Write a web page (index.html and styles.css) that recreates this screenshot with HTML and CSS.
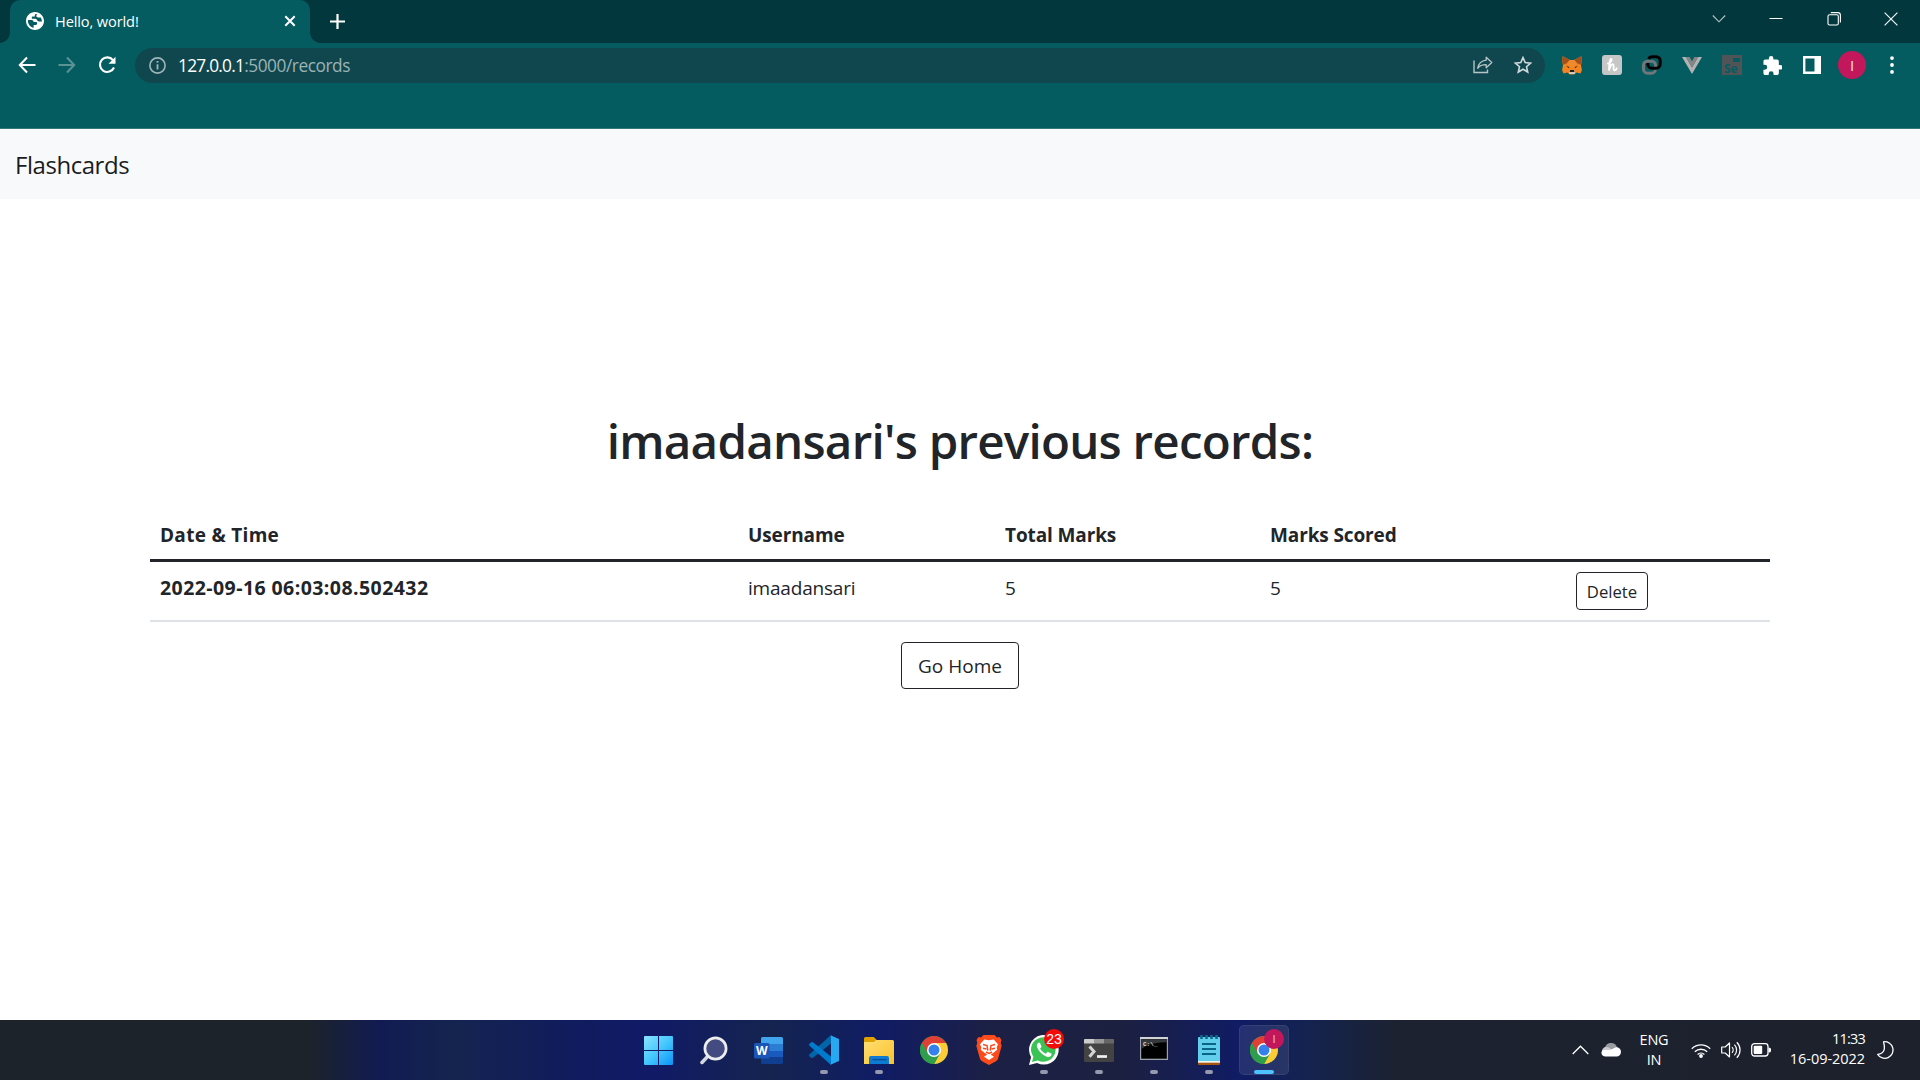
FILE: index.html
```html
<!DOCTYPE html>
<html lang="en">
<head>
<meta charset="utf-8">
<title>Hello, world!</title>
<link rel="stylesheet" href="styles.css">
</head>
<body>
<header class="browser">
  <div class="tabstrip">
    <div class="tab">
      <svg class="globe" width="18" height="18" viewBox="2 2 20 20"><path d="M12 2C6.480 2 2 6.480 2 12s4.480 10 10 10 10-4.480 10-10S17.520 2 12 2zm-1.500 17.600C7 18.900 4.200 15.800 4.200 12c0-.4 0-.8.100-1.200l4 .2c1.400 0 2.200 1 2.200 2.200h2.700c.7 0 1.200.6 1.200 1.300 0 1.200-.8 2-2 2h-1.900zM19.700 12.500h-3.300c-1 0-1.700-.5-2-1.300-.5-1.200-1.500-1.700-3-1.700H8.500V8.200c0-.7.500-1.200 1.200-1.200h2.100V5.300c0-.5.400-1 1-1.200 1.500.1 1.200.2 1.700.3-.8.600-1 1.200-1 2 0 1 .8 1.600 1.900 1.600h2.900c.9 1.200 1.400 2.900 1.400 4.500z" fill="#fff" fill-rule="evenodd"/></svg>
      <span class="tab-title">Hello, world!</span>
      <svg class="tab-close" width="12" height="12" viewBox="0 0 12 12"><path d="M1.300 1.300l9.400 9.400M10.700 1.300 1.300 10.700" stroke="#fff" stroke-width="2"/></svg>
    </div>
    <svg class="new-tab" width="15" height="15" viewBox="0 0 15 15"><path d="M7.500 0v15M0 7.500h15" stroke="#fff" stroke-width="2.200"/></svg>
    <div class="window-controls">
      <svg viewBox="0 0 14 14"><path d="M.8 3.500 7 9.800l6.200-6.300" fill="none" stroke="#b4c4c5" stroke-width="1.100"/></svg>
      <svg viewBox="0 0 14 14"><path d="M.5 6.500h13" stroke="#fff" stroke-width="1"/></svg>
      <svg viewBox="0 0 14 14"><rect x="1" y="2.700" width="10.300" height="10.300" rx="1.500" fill="none" stroke="#fff" stroke-width="1.100"/><path d="M3.800.6h7a2.600 2.600 0 0 1 2.600 2.600v7.300" fill="none" stroke="#fff" stroke-width="1.100"/></svg>
      <svg viewBox="0 0 14 14"><path d="M.6.6l12.800 12.800M13.400.6.6 13.400" stroke="#f0f5f5" stroke-width="1.200"/></svg>
    </div>
  </div>
  <div class="toolbar">
    <div class="cell"><svg width="18" height="18" viewBox="0 0 18 18"><path d="M9 1.500 1.800 9 9 16.500M2 9h15.500" fill="none" stroke="#fff" stroke-width="2"/></svg></div>
    <div class="cell"><svg width="18" height="18" viewBox="0 0 18 18"><path d="M9 1.500 16.200 9 9 16.500M16 9H.5" fill="none" stroke="#5b9296" stroke-width="2"/></svg></div>
    <div class="cell"><svg width="18" height="18" viewBox="0 0 18 18"><path d="M15 4.100A7.300 7.300 0 1 0 16 11.500" fill="none" stroke="#fff" stroke-width="2.100"/><path d="M17.500.8v7h-7z" fill="#fff"/></svg></div>
    <div class="omnibox">
      <svg width="17" height="17" viewBox="0 0 17 17"><circle cx="8.500" cy="8.500" r="7.600" fill="none" stroke="#9fb5b8" stroke-width="1.600"/><path d="M8.500 7.200v5.300M8.500 4v1.800" stroke="#9fb5b8" stroke-width="1.800"/></svg>
      <span class="url">127.0.0.1<span class="path">:5000/records</span></span>
      <div class="cell"><svg width="20" height="18" viewBox="0 0 20 18"><path d="M1 4.500v12h13.500v-3" fill="none" stroke="#b6c4c6" stroke-width="1.400"/><path d="M13.200 1.200 18.800 6.500l-5.600 5.200V8.600c-4.200 0-6.700 1-8.500 3.700.6-4 3-7.500 8.500-8.200z" fill="none" stroke="#b6c4c6" stroke-width="1.300" stroke-linejoin="round"/></svg></div>
      <div class="cell"><svg width="18" height="18" viewBox="0 0 18 18"><path d="M9 1.600l2.200 5 5.400.5-4.100 3.600 1.200 5.300L9 13.200 4.300 16l1.200-5.300L1.400 7.100l5.400-.5z" fill="none" stroke="#d1dadb" stroke-width="1.600"/></svg></div>
    </div>
    <div class="extensions">
      <div class="cell"><svg width="20" height="19" viewBox="0 0 20 19"><path d="M.6.300 8 4h4L19.400.3l.4 5-.8 4 .9 4.700-1.300 3.600-4.100-1-2.300 2H7.800l-2.300-2-4.100 1L.1 14 1 9.300l-.8-4z" fill="#f3841f"/><path d="M.6.300 8 4 5 7.300 1 8.800.2 5.300zM19.400.3 12 4l3 3.300 4 1.500.8-3.500z" fill="#a3501e"/><path d="M5 7.300 7.800 4h4.400L15 7.300l-2.300 4.500H7.300z" fill="#ef8a2d"/><path d="M4 9.800 7.500 11l-.8 1.300zM16 9.800 12.500 11l.8 1.300z" fill="#4f2f16"/><path d="M7.300 14.500h5.400l.3 3.400H7z" fill="#d4c7bb"/><path d="M8 14h4l.4 2.100H7.600z" fill="#202020"/></svg></div>
      <div class="cell"><span class="honey"><svg width="20" height="20" viewBox="0 0 20 20"><path d="M6 8.500C9.500 8 10.500 3.800 8.800 4 7.300 4.300 7.500 10 7 15.500c1-4 2.500-6.500 4-6.200 1.700.4-.5 5.500 1.200 6 1.200.3 2-.8 2.500-2" fill="none" stroke="#fff" stroke-width="1.900" stroke-linecap="round"/></svg></span></div>
      <div class="cell"><svg width="20" height="20" viewBox="0 0 20 20"><rect x="1.500" y="6.200" width="12" height="12" rx="4" fill="none" stroke="#6f777b" stroke-width="3"/><path d="M10.200 1.700h4a4 4 0 0 1 4 4v3.500a4 4 0 0 1-4 4h-4.400a4 4 0 0 1-4-4V8M6.600 4a4 4 0 0 1 3.600-2.300" fill="none" stroke="#000" stroke-width="3"/></svg></div>
      <div class="cell"><svg width="20" height="17" viewBox="0 0 20 17"><path d="M0 0h4l6 10.400L16 0h4L10 17z" fill="#b2b2b2"/><path d="M4 0h3.600L10 4.200 12.400 0H16l-6 10.400z" fill="#858585"/></svg></div>
      <div class="cell"><span class="selenium">Se<i></i></span></div>
      <div class="cell"><svg width="19" height="19" viewBox="1.500 1 21 21"><path d="M20.500 11H19V7c0-1.100-.9-2-2-2h-4V3.500a2.500 2.500 0 0 0-5 0V5H4c-1.100 0-2 .9-2 2v3.800h1.500a2.700 2.700 0 0 1 0 5.400H2V20c0 1.100.9 2 2 2h3.800v-1.500a2.700 2.700 0 0 1 5.400 0V22H17c1.100 0 2-.9 2-2v-4h1.500a2.500 2.500 0 0 0 0-5z" fill="#fff"/></svg></div>
      <div class="cell"><svg width="18" height="18" viewBox="0 0 18 18"><path d="M0 0h18v18H0zM2.400 2.600v12.800h9.100V2.600z" fill="#fff" fill-rule="evenodd"/></svg></div>
      <div class="cell"><span class="avatar">I</span></div>
      <div class="cell"><svg width="4" height="18" viewBox="0 0 4 18"><circle cx="2" cy="2.100" r="1.900" fill="#fff"/><circle cx="2" cy="9" r="1.900" fill="#fff"/><circle cx="2" cy="15.900" r="1.900" fill="#fff"/></svg></div>
    </div>
  </div>
</header>

<nav class="navbar"><a class="brand">Flashcards</a></nav>

<main class="page">
  <h1>imaadansari's previous records:</h1>
  <table class="records">
    <colgroup><col class="c-date"><col class="c-user"><col class="c-total"><col class="c-score"><col></colgroup>
    <thead>
      <tr><th class="date-head">Date &amp; Time</th><th>Username</th><th>Total Marks</th><th>Marks Scored</th><th></th></tr>
    </thead>
    <tbody>
      <tr><th class="stamp">2022-09-16 06:03:08.502432</th><td>imaadansari</td><td>5</td><td>5</td><td><button class="btn small">Delete</button></td></tr>
    </tbody>
  </table>
  <button class="btn home">Go Home</button>
</main>

<footer class="taskbar">
  <div class="apps">
    <div class="app"><svg width="29" height="29" viewBox="0 0 29 29"><defs><linearGradient id="win" x1="0" y1="0" x2="1" y2="1"><stop offset="0" stop-color="#8be3ff"/><stop offset=".5" stop-color="#45c8fc"/><stop offset="1" stop-color="#0b93f8"/></linearGradient></defs><path d="M1 0h13v14H0V1a1 1 0 0 1 1-1zM15 0h13a1 1 0 0 1 1 1v13H15zM0 15h14v14H1a1 1 0 0 1-1-1zM15 15h14v13a1 1 0 0 1-1 1H15z" fill="url(#win)"/></svg></div>
    <div class="app"><svg width="28" height="29" viewBox="0 0 28 29"><path d="M8.500 19.500 2 26.500" stroke="#d5d8dc" stroke-width="3.500" stroke-linecap="round"/><circle cx="15.500" cy="12.500" r="10.600" fill="#444b80" stroke="#eceded" stroke-width="2.700"/></svg></div>
    <div class="app"><svg width="29" height="27" viewBox="0 0 29 27"><path d="M7 1.500A1.500 1.500 0 0 1 8.500 0h19A1.500 1.500 0 0 1 29 1.500V7H7z" fill="#41a5ee"/><path d="M7 7h22v7H7z" fill="#2b7cd3"/><path d="M7 14h22v6.500H7z" fill="#185abd"/><path d="M7 20.500h22v5a1.500 1.500 0 0 1-1.500 1.500h-19A1.500 1.500 0 0 1 7 25.500z" fill="#103f91"/><rect y="6" width="15.500" height="15.500" rx="1.500" fill="#1a56b8"/><text x="7.700" y="17.700" text-anchor="middle" class="glyph-w">W</text></svg></div>
    <div class="app running"><svg width="30" height="30" viewBox="0 0 30 30"><path d="M22 0v8.500L4 22.700a1.500 1.500 0 0 1-1.800 0L.5 21.200a1.300 1.300 0 0 1 0-1.900z" fill="#0065a9"/><path d="M22 30v-8.500L4 7.300a1.500 1.500 0 0 0-1.800 0L.5 8.800a1.300 1.300 0 0 0 0 1.900z" fill="#007acc"/><path d="M21.500.3 30 4v22l-8.500 3.700c.5-.3.500-1 .5-1.500v-26c0-.8 0-1.500-.5-1.900z" fill="#29a8f2"/></svg></div>
    <div class="app running"><svg width="30" height="27" viewBox="0 0 30 27"><defs><linearGradient id="fold" x1="0" y1="0" x2="1" y2="1"><stop offset="0" stop-color="#ffdf72"/><stop offset="1" stop-color="#fbc02d"/></linearGradient></defs><path d="M0 7V1.500A1.500 1.500 0 0 1 1.500 0h8.300l3 3H18v4z" fill="#dfa000"/><path d="M0 5h10l2-2h16.500A1.500 1.500 0 0 1 30 4.500V27H0z" fill="url(#fold)"/><path d="M5 27v-6a2 2 0 0 1 2-2h16a2 2 0 0 1 2 2v6z" fill="#0d7ad3"/><path d="M9 22.700h13" stroke="#0a4c92" stroke-width="1.300" stroke-linecap="round"/></svg></div>
    <div class="app"><svg width="28" height="28" viewBox="0 0 28 28"><g id="chrome"><circle cx="14" cy="14" r="14" fill="#2f9e4c"/><path d="M1.900 7A14 14 0 0 1 26.100 7H14v7z" fill="#df3f34"/><path d="M26.100 7A14 14 0 0 1 14 28l6-10.500L14 7z" fill="#fccb36"/><path d="M1.900 7 8 17.500 14 14V7z" fill="#df3f34"/><path d="M1.900 7A14 14 0 0 0 14 28l6-10.500H8z" fill="#2f9e4c"/><circle cx="14" cy="14" r="7" fill="#fff"/><circle cx="14" cy="14" r="5.500" fill="#3480ec"/></g></svg></div>
    <div class="app"><svg width="26" height="30" viewBox="0 0 26 30"><path d="M7.500 0h11l2.500 2.500 2.500-.4 2 3-.8 3 1 2.700-3.500 12.500q-.6 2-2.200 3L13 30l-7-3.700q-1.600-1-2.200-3L.3 10.800l1-2.700-.8-3 2-3L5 2.500z" fill="#fb4b1d"/><path d="M8.300 4.500 13 5.300l4.700-.8 4.300 4.700-1.300 3 .5 2.500-4 3.300-2.500 1.500 3.300 2.200L13 25l-5-3.300 3.300-2.200-2.500-1.500-4-3.300.5-2.500-1.300-3z" fill="#fff"/><path d="M7 9.500l4 1 .8 5.200M19 9.500l-4 1-.8 5.200M7 13.300l3.400.6M19 13.300l-3.400.6M10 17l3 1.500 3-1.500" fill="none" stroke="#fb4b1d" stroke-width="1.500"/></svg></div>
    <div class="app running"><svg width="30" height="30" viewBox="0 0 30 30"><path d="M0 30l2.100-7.700A14.800 14.800 0 1 1 8 27.900z" fill="#fff"/><path d="M3 27l1.400-5.200a12.300 12.300 0 1 1 4.400 3.700z" fill="#3bc455"/><path d="M9.400 7.800c-1.600 1.200-2 3-.9 5.300 2 4.200 5 7.200 9.300 8.700 2.300.8 4.700-.2 4.900-3l-4-2-1.800 2c-2.700-1.200-4.500-2.900-5.800-5.300l1.500-1.800-1.700-4z" fill="#fff"/></svg><span class="badge unread">23</span></div>
    <div class="app running"><svg width="30" height="23" viewBox="0 0 30 23"><rect width="30" height="23" rx="1.500" fill="#434343"/><path d="M1 0h9v4.500H0V1a1 1 0 0 1 1-1z" fill="#ccc"/><path d="M10 0h10v4.500H10z" fill="#999"/><path d="M20 0h9a1 1 0 0 1 1 1v3.500H20z" fill="#666"/><path d="M5.500 7.500 10 12.500l-4.500 5.300" fill="none" stroke="#d4d4d4" stroke-width="3"/><path d="M13 17.500h10" stroke="#f0f0f0" stroke-width="2.700"/></svg></div>
    <div class="app running"><svg class="cmd" width="28" height="23" viewBox="0 0 28 23"><rect width="28" height="23" fill="#9ba1ab"/><path d="M0 0h28v2H0z" fill="#cfd3d8"/><rect x="1.200" y="2.200" width="25.600" height="19.500" fill="#000"/><path d="M1.200 2.200h25.600v3C12 5 6 9 1.200 12z" fill="#35383c"/><text x="3" y="8.800" class="glyph-c">C:\_</text></svg></div>
    <div class="app running"><svg width="22" height="30" viewBox="0 0 22 30"><rect y="25" width="22" height="5" rx="1" fill="#a8560f"/><path d="M0 25.500h22v2.200H0z" fill="#f1f1f1"/><path d="M0 3a1 1 0 0 1 1-1h20a1 1 0 0 1 1 1v23H0z" fill="#61cfec"/><path d="M3.500 0v4M8.500 0v4M13.500 0v4M18.500 0v4" stroke="#0c6b8d" stroke-width="2.600"/><path d="M4 9h14M4 14h14M4 19h14" stroke="#0a6488" stroke-width="2"/></svg></div>
    <div class="app running active"><svg width="28" height="28" viewBox="0 0 28 28"><use href="#chrome"/></svg><span class="badge profile">I</span></div>
  </div>
  <div class="tray">
    <svg class="up" width="17" height="10" viewBox="0 0 17 10"><path d="M.7 9 8.500 1.200 16.300 9" fill="none" stroke="#fff" stroke-width="1.300"/></svg>
    <svg class="cloud" width="20" height="14" viewBox="0 0 20 14"><path d="M4 5A5.500 5.500 0 0 1 10 0c3.500 0 5.500 2 6 4.500l-2 3H3z" fill="#999ca1"/><path d="M3 4.500c3-1 5 0 7 1.500l5 4H2A4 4 0 0 1 3 4.500z" fill="#c9cbce"/><path d="M4 13.500a3.500 3.500 0 0 1-2-6.400L9 7l6-2.700c3 0 5 2 5 4.700s-2 4.500-4.500 4.500z" fill="#fff"/></svg>
    <div class="lang"><span>ENG</span><span>IN</span></div>
    <svg class="wifi" width="20" height="15" viewBox="0 0 20 15"><path d="M.8 5.700a13 13 0 0 1 18.400 0M3.800 8.800a8.800 8.800 0 0 1 12.400 0M6.600 11.500a4.900 4.900 0 0 1 6.800 0" fill="none" stroke="#fff" stroke-width="1.300"/><circle cx="10" cy="13" r="1.900" fill="#fff"/></svg>
    <svg class="sound" width="20" height="18" viewBox="0 0 20 18"><path d="M.7 6h3.500L8.500 2v14l-4.300-4H.7z" fill="none" stroke="#fff" stroke-width="1.200" stroke-linejoin="round"/><path d="M11 6.200a4 4 0 0 1 0 5.600M13.400 3.700a7.500 7.500 0 0 1 0 10.600M15.800 1.200a11 11 0 0 1 0 15.600" fill="none" stroke="#fff" stroke-width="1.200"/></svg>
    <svg class="battery" width="20" height="14" viewBox="0 0 20 14"><rect x=".7" y=".7" width="16.300" height="12.300" rx="2.800" fill="none" stroke="#fff" stroke-width="1.300"/><rect x="2.700" y="2.800" width="8.500" height="8.200" rx="1" fill="#fff"/><path d="M17.500 4.500q2.500 0 2.500 1.500v2q0 1.500-2.500 1.500z" fill="#fff"/></svg>
    <div class="clock"><span>11:33</span><span>16-09-2022</span></div>
    <svg class="moon" width="17" height="18" viewBox="0 0 17 18"><path d="M6.500.8a8.300 8.300 0 1 1-5.800 12.700c4.500-.8 6.300-3 6.600-5.500.3-2.700-.1-4.700-.8-7.200z" fill="none" stroke="#fff" stroke-width="1.300" stroke-linejoin="round"/></svg>
  </div>
</footer>
</body>
</html>
```
FILE: styles.css
```css
* { box-sizing: border-box; }
body {
  margin: 0;
  height: 1080px;
  overflow: hidden;
  display: flex;
  flex-direction: column;
  background: #fff;
  color: #212529;
  font: 19px/30px "Open Sans", "Noto Sans", sans-serif;
}
svg { display: block; flex: none; }

/* Browser frame */
.browser { height: 129px; background: #045c61; border-bottom: 1px solid #35797d; color: #fff; }
.tabstrip { height: 43px; background: #02383d; display: flex; align-items: center; padding-left: 10px; }
.tab {
  position: relative;
  width: 300px; height: 43px;
  background: #045c61;
  border-radius: 10px 10px 0 0;
  display: flex; align-items: center;
  padding: 0 14px 1px 16px;
}
.tab::before, .tab::after {
  content: ""; position: absolute; bottom: 0; width: 10px; height: 10px;
}
.tab::before { left: -10px; background: radial-gradient(circle at 0 0, transparent 9.500px, #045c61 10px); }
.tab::after { right: -10px; background: radial-gradient(circle at 100% 0, transparent 9.500px, #045c61 10px); }
.tab-title { margin-left: 11px; font-size: 14.600px; letter-spacing: -.12px; }
.tab-close { margin-left: auto; }
.new-tab { margin: 0 0 1px 20px; }
.window-controls { margin-left: auto; display: flex; gap: 43.500px; padding: 0 22px 6px 0; }
.window-controls svg { width: 14px; height: 14px; }
.toolbar { height: 44px; display: flex; align-items: center; padding-left: 7px; }
.cell { width: 40px; height: 40px; flex: none; display: flex; align-items: center; justify-content: center; }
.omnibox {
  flex: 1; height: 35px; margin-left: 8px; margin-right: 7px; padding-left: 14px; padding-right: 2px;
  border-radius: 18px; background: #10474e;
  display: flex; align-items: center;
}
.url { flex: 1; margin-left: 12px; padding-top: 1px; font-size: 17.300px; letter-spacing: -.75px; }
.path { color: #9bb3b5; letter-spacing: -.45px; }
.extensions { display: flex; padding-right: 8px; }
.honey { width: 20px; height: 20px; border-radius: 3px; background: #c6c6c6; }
.selenium {
  position: relative; width: 20px; height: 20px; background: #505457; color: #045c61;
  font: bold 12px/28px "Open Sans", sans-serif; padding-left: 2px;
}
.selenium i { position: absolute; right: 2px; top: 3px; width: 7px; height: 4px; background: #045c61; }
.avatar {
  width: 28px; height: 28px; border-radius: 50%; background: #c2185b; color: #f8dce7;
  font: 15px/28px "Open Sans", sans-serif; text-align: center;
}

/* Page */
.navbar { height: 70px; background: #f8f9fb; padding: 0 15px; display: flex; align-items: center; }
.brand { font-size: 24px; letter-spacing: -.45px; color: #1b1c1d; padding-top: 1px; }
.page { flex: 1; display: flex; flex-direction: column; align-items: center; padding-top: 212px; }
h1 { margin: 0; font-size: 47.500px; font-weight: 600; letter-spacing: -.75px; line-height: 60px; }
.records { width: 1620px; margin-top: 39px; table-layout: fixed; border-collapse: collapse; text-align: left; }
.records th, .records td { padding: 10px; vertical-align: top; }
.records td { letter-spacing: -.2px; }
.records td, .records tbody th { padding-top: 11px; }
.records thead th { height: 50px; padding: 10px 10px 9px; letter-spacing: -.12px; }
.records thead .date-head { letter-spacing: .3px; }
.records thead tr { border-bottom: 3px solid #212529; }
.records tbody tr { border-bottom: 2px solid #dee2e6; height: 60px; }
.records th { font-weight: 700; }
.records .stamp { font-size: 19.500px; letter-spacing: .43px; }
.c-date { width: 588px; } .c-user { width: 257px; } .c-total { width: 265px; } .c-score { width: 306px; }
.btn {
  display: block; background: #fff; color: #212529; border: 1px solid #212529; border-radius: 4px;
  font: inherit; text-align: center; padding: 0;
}
.btn.small { width: 72px; height: 38px; margin-top: -1px; padding-top: 1px; font-size: 16.700px; letter-spacing: 0; }
.btn.home { width: 118px; height: 47px; margin-top: 20px; }

/* Taskbar */
.taskbar {
  height: 60px; color: #fff;
  display: grid; grid-template-columns: 1fr 660px 1fr;
  background: linear-gradient(90deg, #1c232b 0, #1c232b 310px, #111b52 380px, #14244f 455px, #101c5d 570px, #111a66 650px, #14244f 770px, #101c64 880px, #1c2045 990px, #1c2040 1120px, #101c64 1240px, #14234f 1310px, #1c222f 1400px, #1c212c 100%);
}
.apps { grid-column: 2; display: flex; margin-left: 1px; }
.app { position: relative; width: 55px; height: 60px; flex: none; display: flex; align-items: center; justify-content: center; }
.app svg { position: relative; }
.app .cmd { margin-bottom: 3px; }
.running::after {
  content: ""; position: absolute; left: 24px; bottom: 6px; width: 8px; height: 4px; border-radius: 2px; background: #9499af;
}
.active::before {
  content: ""; position: absolute; inset: 5px 2px 5px 3px; border-radius: 5px; background: rgba(255,255,255,.09); border: 1px solid rgba(255,255,255,.07);
}
.running.active::after { left: 18px; width: 20px; background: #4cc2ff; }
.badge { position: absolute; left: 28px; top: 9px; width: 20px; height: 20px; border-radius: 50%; text-align: center; font: 14px/20px "Liberation Sans", sans-serif; }
.unread { background: #f50a0a; }
.profile { background: #c2185b; color: #f3a8c4; font-size: 11px; }
.glyph-w { font: bold 12px "Open Sans", sans-serif; fill: #fff; }
.glyph-c { font: bold 6px "Liberation Mono", monospace; fill: #ddd; }
.tray { display: flex; align-items: center; justify-content: flex-end; padding-right: 26px; }
.lang, .clock { display: flex; flex-direction: column; font-size: 14.500px; line-height: 20px; }
.lang { margin: 0 22px 0 18px; width: 30px; align-items: center; letter-spacing: -.2px; }
.clock { align-items: flex-end; margin: -2px 12px 0 18px; width: 76px; letter-spacing: -.05px; }
.clock span:first-child { letter-spacing: -.8px; }
.cloud { margin-left: 12px; }
.sound, .battery { margin-left: 10px; }
```
